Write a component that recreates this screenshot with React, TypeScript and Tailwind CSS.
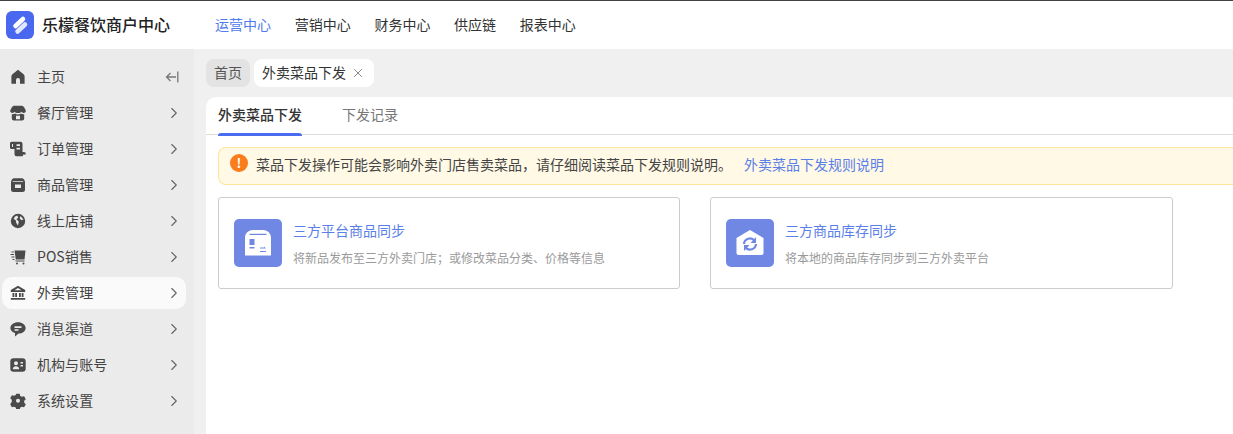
import React from "react";
import { ChevronRight, X } from "lucide-react";

const C = "currentColor";
const icons: Record<string, React.ReactNode> = {
  home: <path fill={C} d="M8 .800 2.700 5C1.900 5.700 1.400 6.500 1.400 7.500V14.800H6V11a2 2 0 0 1 4 0v3.800h4.600V7.500c0-1-.5-1.800-1.300-2.500z" />,
  shop: (
    <g fill={C}>
      <path d="M4.500.800h7c1.200 0 2 .6 2.600 1.500L15.800 5.500C16 7 15 8 13.600 8c-.9 0-1.700-.5-2.200-1.200-.7.8-1.600 1.200-2.400 1.200H7c-.8 0-1.700-.4-2.400-1.200C4.100 7.500 3.300 8 2.400 8 1 8 0 7 .2 5.500l1.700-3.200C2.500 1.400 3.300.800 4.500.800z" />
      <path fillRule="evenodd" d="M1.800 9.200c1.100.2 2.400 0 3.200-.6.900.6 2 .9 3 .9s2.100-.3 3-.9c.8.6 2.100.8 3.200.6V13.500a2 2 0 0 1-2 2H3.800a2 2 0 0 1-2-2zM6 10.800v3.400h4v-3.400z" />
    </g>
  ),
  order: <path fill={C} fillRule="evenodd" d="M1.500.800H10.500a2 2 0 0 1 2 2V11h1.500a1.800 1.800 0 0 1 1.800 1.800V13.500h-2.500l-.6 1.800H6.500a2 2 0 0 1-2-2V8H1.500A1.500 1.500 0 0 1 0 6.500V2.300A1.500 1.500 0 0 1 1.500.800zM6.500 3.300v1.700h3.500V3.300zM6.500 6.700v1.700h3.500V6.700zM2 3v3h1V3z" />,
  goods: <path fill={C} fillRule="evenodd" d="M4.500 1.200h7c1.200 0 2.100.5 2.700 1.500.5.800.8 1.600.8 2.800v7A2.500 2.500 0 0 1 12.500 15h-9A2.500 2.500 0 0 1 1 12.500v-7c0-1.200.3-2 .8-2.800.6-1 1.500-1.500 2.700-1.500zM2.800 4.200v.9h10.400v-.9zM5 7.500v3.500h6V7.500z" />,
  globe: <path fill={C} fillRule="evenodd" d="M8 .800a7.200 7.200 0 1 0 0 14.400A7.200 7.200 0 0 0 8 .800zM5 3.500 7.300 2.600l.9 2.200-1.800 1.500 2.400 2.200-.8 4-1.700-2.500-.6-2.800-2.100-1.400zM10.500 3.100l3 3.400-2 .8-1.800-1.800z" />,
  cart: (
    <g fill={C}>
      <path d="M4.500 1.500h11l-1 9H5.800z" />
      <path d="M5.500 11.500h9v1h-9z" />
      <circle cx="7" cy="14.500" r="1" />
      <circle cx="13.500" cy="14.500" r="1" />
      <path d="M1.500 2.500h2.200v1H1.500zM.5 5h3.500v1H.5zM1.500 7.500H4.500v1H1.500zM2.500 10h2v1h-2z" />
    </g>
  ),
  bank: (
    <g fill={C}>
      <path fillRule="evenodd" d="M8 .800 15.200 5v2H.800V5zM8 3 4.500 5.300h7z" />
      <path d="M2.500 8h1.800v4H2.500zM5.200 8H7v4H5.200zM9 8h1.800v4H9zM11.700 8h1.800v4h-1.800zM.800 13h14.400v1.800H.800z" />
    </g>
  ),
  msg: <path fill={C} fillRule="evenodd" d="M8 1.200c4.200 0 7.600 2.500 7.600 5.700S12.200 12.600 8.500 12.600L5 15.600v-3.600C2.200 11.100.400 9.200.400 6.900.400 3.700 3.800 1.200 8 1.200zM4.500 5.300v1.600h7V5.300zM4.500 8.200v1.500h4V8.200z" />,
  org: <path fill={C} fillRule="evenodd" d="M3.500 1.300h9a3.200 3.200 0 0 1 3.200 3.200v7a3.200 3.200 0 0 1-3.200 3.200h-9A3.200 3.200 0 0 1 .300 11.500v-7A3.200 3.200 0 0 1 3.500 1.300zM6 4.300a2 2 0 1 0 0 4 2 2 0 0 0 0-4zM2.800 12.300h6.400c0-1.900-1.300-3-3.200-3s-3.200 1.100-3.200 3zM10.500 5v1.500H13V5zM10.500 8v1.500H13V8z" />,
  gear: <path fill={C} fillRule="evenodd" d="M6.300.700h3.400l.6 2.200 1.600.9 2.200-.6 1.700 3-1.600 1.600v1.900l1.600 1.600-1.700 3-2.200-.6-1.600.9-.6 2.200H6.300l-.6-2.200-1.600-.9-2.200.6-1.700-3L1.800 8.700V6.800L.2 5.200l1.700-3 2.200.6 1.600-.9zM8 5.800a2 2 0 1 0 0 4 2 2 0 0 0 0-4z" />,
};

const menu = [
  ["shop", "餐厅管理"],
  ["order", "订单管理"],
  ["goods", "商品管理"],
  ["globe", "线上店铺"],
  ["cart", "POS销售"],
  ["bank", "外卖管理"],
  ["msg", "消息渠道"],
  ["org", "机构与账号"],
  ["gear", "系统设置"],
];

function MenuIcon({ name }: { name: string }) {
  return (
    <svg viewBox="0 0 16 16" className="h-[16px] w-[16px] shrink-0 text-[#4a4a4a]">
      {icons[name]}
    </svg>
  );
}

function Row({ icon, label, right, active }: { icon: string; label: string; right: React.ReactNode; active?: boolean }) {
  return (
    <div className="flex h-[36px] items-center">
      <div className={`ml-[2px] flex h-[32px] w-[184px] items-center rounded-[10px] pl-[8px] pr-[6px] ${active ? "bg-[#fafafa]" : ""}`}>
        <MenuIcon name={icon} />
        <span className="ml-[11px] flex-1 pb-[2px] text-[14px] tracking-[0.05px] text-[#444]">{label}</span>
        {right}
      </div>
    </div>
  );
}

function Card({ title, desc, icon, className }: { title: string; desc: string; icon: React.ReactNode; className: string }) {
  return (
    <div className={`flex h-[92px] items-center rounded-[3px] border border-[#cccccc] bg-white pl-[15px] ${className}`}>
      <div className="flex h-[48px] w-[48px] shrink-0 items-center justify-center rounded-[5px] bg-[#7088e3]">{icon}</div>
      <div className="ml-[11px] pt-[2px]">
        <div className="text-[14px] leading-[18px] text-[#5b7fe8]">{title}</div>
        <div className="mt-[10px] text-[12px] leading-[18px] text-[#9a9a9a]">{desc}</div>
      </div>
    </div>
  );
}

export default function App() {
  return (
    <div
      className="flex h-[434px] w-[1233px] flex-col overflow-hidden border-t border-[#444] bg-white"
      style={{ fontFamily: '"Noto Sans CJK SC", Inter, sans-serif' }}
    >
      <header className="flex h-[48px] shrink-0 items-center bg-white">
        <div className="ml-[6px] flex h-[28px] w-[28px] items-center justify-center rounded-[6px] bg-[#4a67f0]">
          <svg viewBox="0 0 28 28" className="h-[28px] w-[28px]" fill="none" strokeLinecap="round">
            <path stroke="#fff" strokeWidth="4.500" d="M9.500 15 17 8" />
            <path stroke="#fff" strokeWidth="4.500" opacity=".85" d="M11.500 20.500 19 13.500" />
          </svg>
        </div>
        <span className="ml-[8px] pb-[2px] text-[16px] font-medium text-[#222]">乐檬餐饮商户中心</span>
        <nav className="ml-[45px] flex gap-[23.700px] pb-[2px] text-[14px] text-[#333]">
          <span className="text-[#4f7cf0]">运营中心</span>
          <span>营销中心</span>
          <span>财务中心</span>
          <span>供应链</span>
          <span>报表中心</span>
        </nav>
      </header>
      <div className="flex flex-1">
        <aside className="w-[194px] shrink-0 bg-[#ebebeb] pt-[10px]">
          <Row
            icon="home"
            label="主页"
            right={
              <svg viewBox="0 0 14 14" className="mr-[1px] h-[14px] w-[14px]" fill="none" stroke="#777" strokeWidth="1.300">
                <path d="M12.800 1.500v11M11 7H1.500M5.500 3 1.500 7l4 4" />
              </svg>
            }
          />
          {menu.map(([i, l]) => (
            <Row
              key={l}
              icon={i}
              label={l}
              active={l === "外卖管理"}
              right={<ChevronRight className="mr-[-3px] h-[18px] w-[18px] text-[#666]" strokeWidth={1.500} />}
            />
          ))}
        </aside>
        <main className="flex min-w-0 flex-1 flex-col bg-[#f0f0f0] pl-[12px] pt-[10px]">
          <div className="flex h-[28px] items-center gap-[4px]">
            <span className="flex h-[28px] items-center rounded-[8px] bg-[#e3e3e3] px-[8px] pb-[2px] text-[14px] text-[#555]">首页</span>
            <span className="flex h-[28px] items-center rounded-[8px] bg-white pb-[2px] pl-[8px] pr-[9px] text-[14px] text-[#333]">
              外卖菜品下发
              <X className="ml-[5px] mt-[1px] h-[14px] w-[14px] text-[#777]" strokeWidth={1.500} />
            </span>
          </div>
          <section className="mt-[10px] flex-1 rounded-tl-[10px] bg-white">
            <div className="flex h-[38px] border-b border-[#dddddd] pl-[12px] text-[14px]">
              <div className="relative h-[38px] pt-[7px] font-medium text-[#333]">
                外卖菜品下发
                <span className="absolute bottom-[-1px] left-0 h-[3px] w-full rounded-t-[3px] bg-[#4a6cf0]" />
              </div>
              <div className="ml-[40px] pt-[7px] text-[#777]">下发记录</div>
            </div>
            <div className="ml-[12px] mt-[12px] flex h-[38px] items-center rounded-l-[8px] border border-r-0 border-[#fde498] bg-[#fff9e6] pb-[3px] pl-[11px] text-[14px] text-[#444]">
              <span className="relative top-[-2px] flex h-[18px] w-[18px] items-center justify-center rounded-full bg-[#fb7c1b] text-[13px] font-bold leading-none text-white">!</span>
              <span className="ml-[8px]">菜品下发操作可能会影响外卖门店售卖菜品，请仔细阅读菜品下发规则说明。</span>
              <span className="ml-[12px] text-[#5b7fe8]">外卖菜品下发规则说明</span>
            </div>
            <div className="ml-[12px] mt-[12px] flex gap-[30px]">
              <Card
                className="w-[462px]"
                title="三方平台商品同步"
                desc="将新品发布至三方外卖门店；或修改菜品分类、价格等信息"
                icon={
                  <svg viewBox="0 0 28 28" className="h-[28px] w-[28px]">
                    <path fill="#fff" fillRule="evenodd" d="M9 1h10c4 0 8 3 8 7.500V26.500H1V8.500C1 4 5 1 9 1zM5.500 4.800v1.200h17V4.800zM5.500 10v6h5v-6zM5.500 18v1.500h5V18zM16 18.500v1h6l-2-2v1zM16 22v1h6v-1h-4z" />
                  </svg>
                }
              />
              <Card
                className="w-[463px]"
                title="三方商品库存同步"
                desc="将本地的商品库存同步到三方外卖平台"
                icon={
                  <svg viewBox="0 0 28 28" className="h-[28px] w-[28px]">
                    <path fill="#fff" d="M14 1 27.500 9v15a2 2 0 0 1-2 2h-23a2 2 0 0 1-2-2V9z" />
                    <path fill="none" stroke="#7088e3" strokeWidth="2.200" d="M8 15a6 6 0 0 1 10.500-3.500M20 15a6 6 0 0 1-10.500 3.500" />
                    <path fill="#7088e3" d="M20 8v6h-5.500zM8 22v-6h5.500z" />
                  </svg>
                }
              />
            </div>
          </section>
        </main>
      </div>
    </div>
  );
}
